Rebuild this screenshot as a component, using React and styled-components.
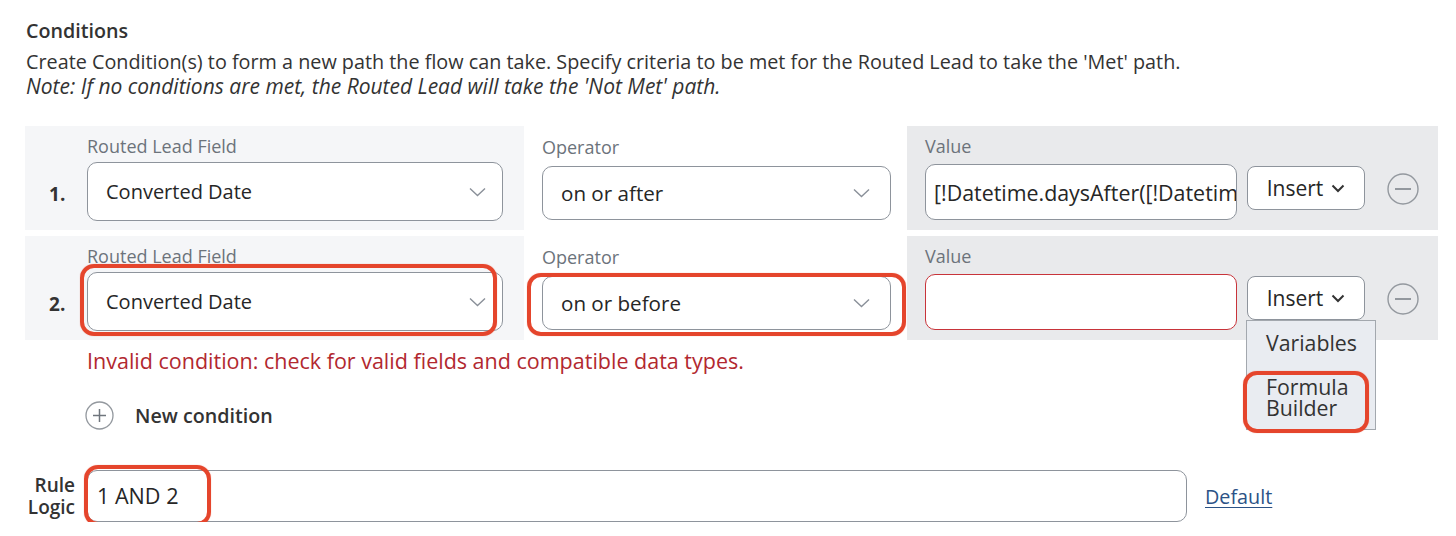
import React from "react";
import styled, { createGlobalStyle } from "styled-components";

const GlobalStyle = createGlobalStyle`
  body {
    margin: 0;
    background: #ffffff;
    font-family: "Open Sans", "Noto Sans", sans-serif;
    color: #333333;
  }
`;

const Page = styled.div`
  padding: 19px 18px 0 25px;
  width: 1413px;
`;

const Title = styled.h3`
  margin: 0 0 0 1px;
  font-size: 19.7px;
  font-weight: 600;
  line-height: 24px;
  color: #333;
`;

const Desc = styled.p`
  margin: 6px 0 0 1px;
  font-size: 19.8px;
  line-height: 25px;
  color: #333;
  white-space: nowrap;
  em {
    display: block;
    font-size: 21px;
  }
`;

const List = styled.div`
  margin-top: 27px;
  display: flex;
  flex-direction: column;
  gap: 6px;
`;

const Row = styled.div`
  display: grid;
  grid-template-columns: 499px 383px 531px;
  height: 104px;
`;

const FieldCell = styled.div`
  background: #f5f6f8;
  padding: 8px 21px 0 0;
  display: grid;
  grid-template-columns: 62px 1fr;
  grid-template-rows: 24px 59px;
  row-gap: 4px;
`;

const Label = styled.div`
  grid-column: 2;
  font-size: 18px;
  line-height: 24px;
  color: #6c737b;
  white-space: nowrap;
`;

const Num = styled.div`
  grid-column: 1;
  grid-row: 2;
  align-self: center;
  padding: 4px 0 0 24px;
  font-size: 19px;
  font-weight: 700;
  color: #333;
`;

const OperatorCell = styled.div`
  background: #ffffff;
  padding: 9px 16px 0 18px;
  display: flex;
  flex-direction: column;
  gap: 7px;
`;

const ValueCell = styled.div`
  background: #e9eaec;
  padding: 8px 0 0 18px;
  display: flex;
  flex-direction: column;
  gap: 6px;
`;

const Select = styled.div`
  position: relative;
  height: ${(p) => p.$h}px;
  box-sizing: border-box;
  background: #fff;
  border: 1px solid #8e949c;
  border-radius: 10px;
  display: flex;
  align-items: center;
  justify-content: space-between;
  padding: 0 ${(p) => p.$pr}px 0 18px;
  font-size: ${(p) => p.$fs}px;
  color: #262626;
`;

const Controls = styled.div`
  display: flex;
  align-items: flex-start;
`;

const ValueInput = styled.div`
  width: 312px;
  height: 56px;
  box-sizing: border-box;
  background: #fff;
  border: 1px solid ${(p) => (p.$invalid ? "#c8343a" : "#8e949c")};
  border-radius: 10px;
  padding: 0 0 0 8px;
  display: flex;
  align-items: center;
  overflow: hidden;
  white-space: nowrap;
  font-size: 21.4px;
  color: #262626;
`;

const InsertWrap = styled.div`
  position: relative;
  margin: 2px 0 0 10px;
`;

const InsertButton = styled.div`
  width: 118px;
  height: 44px;
  box-sizing: border-box;
  background: #fff;
  border: 1px solid #8e949c;
  border-radius: 8px;
  display: flex;
  align-items: center;
  justify-content: center;
  gap: 8px;
  font-size: 21px;
  color: #262626;
`;

const Menu = styled.div`
  position: absolute;
  top: 100%;
  left: -1px;
  width: 130px;
  height: 110px;
  box-sizing: border-box;
  background: #e9ecf1;
  border: 1px solid #a3a8ae;
  padding: 9px 0 0 0;
  z-index: 5;
`;

const MenuItem = styled.div`
  position: relative;
  padding: 0 0 0 19px;
  font-size: 21.3px;
  line-height: ${(p) => p.$lh}px;
  color: #333;
  margin-bottom: ${(p) => p.$mb || 0}px;
`;

const RemoveButton = styled.div`
  margin: 9px 0 0 22px;
  width: 32px;
  height: 32px;
`;

const Highlight = styled.div`
  position: relative;
  &::after {
    content: "";
    position: absolute;
    top: ${(p) => p.$t}px;
    left: ${(p) => p.$l}px;
    right: ${(p) => p.$r}px;
    bottom: ${(p) => p.$b}px;
    border: 4px solid #e5452c;
    border-radius: 14px;
    box-shadow: 0 0 1px rgba(229, 69, 44, 0.6);
    pointer-events: none;
    z-index: 6;
  }
`;

const RuleValue = styled(Highlight)`
  height: 26px;
  line-height: 26px;
`;

const ErrorText = styled.div`
  margin: 8px 0 0 62px;
  font-size: 21.5px;
  line-height: 26px;
  color: #b2282f;
  white-space: nowrap;
`;

const NewCondition = styled.div`
  margin: 26px 0 0 60px;
  display: flex;
  align-items: center;
  gap: 21px;
  height: 30px;
  font-size: 19.7px;
  font-weight: 600;
  color: #333;
`;

const RuleRow = styled.div`
  margin-top: 40px;
  display: flex;
  align-items: center;
`;

const RuleLabel = styled.div`
  width: 50px;
  margin-right: 12px;
  text-align: right;
  font-size: 19px;
  font-weight: 600;
  line-height: 22px;
  color: #333;
`;

const RuleInput = styled.div`
  width: 1100px;
  height: 52px;
  box-sizing: border-box;
  border: 1px solid #8e949c;
  border-radius: 10px;
  padding-left: 9px;
  display: flex;
  align-items: center;
  font-size: 21.6px;
  color: #262626;
`;

const DefaultLink = styled.a`
  margin-left: 18px;
  font-size: 19.8px;
  color: #2b5286;
  text-decoration: underline;
  text-underline-offset: 3px;
`;

const SelectChevron = () => (
  <svg width="17" height="10" viewBox="0 0 17 10">
    <polyline points="1,1.5 8.5,8.5 16,1.5" fill="none" stroke="#8a9099" strokeWidth="1.4" />
  </svg>
);

const InsertChevron = () => (
  <svg width="14" height="9" viewBox="0 0 14 9">
    <polyline points="1.5,1.5 7,7 12.5,1.5" fill="none" stroke="#333" strokeWidth="2" />
  </svg>
);

const MinusCircle = () => (
  <svg width="32" height="32" viewBox="0 0 32 32">
    <circle cx="16" cy="16" r="15" fill="none" stroke="#93989e" strokeWidth="1.4" />
    <line x1="8" y1="16" x2="24" y2="16" stroke="#93989e" strokeWidth="2" />
  </svg>
);

const PlusCircle = () => (
  <svg width="29" height="29" viewBox="0 0 29 29">
    <circle cx="14.5" cy="14.5" r="13.5" fill="none" stroke="#93989e" strokeWidth="1.3" />
    <line x1="8" y1="14.5" x2="21" y2="14.5" stroke="#6f757c" strokeWidth="1.5" />
    <line x1="14.5" y1="8" x2="14.5" y2="21" stroke="#6f757c" strokeWidth="1.5" />
  </svg>
);

const conditions = [
  { n: 1, field: "Converted Date", op: "on or after", value: "[!Datetime.daysAfter([!Datetime.now], 3)]" },
  { n: 2, field: "Converted Date", op: "on or before", value: "", invalid: true, open: true },
];

function ConditionRow({ c }) {
  const field = (
    <Select $h={59} $pr={16} $fs={20}>
      {c.field}
      <SelectChevron />
    </Select>
  );
  const op = (
    <Select $h={54} $pr={20} $fs={20.6}>
      {c.op}
      <SelectChevron />
    </Select>
  );
  return (
    <Row>
      <FieldCell>
        <Label>Routed Lead Field</Label>
        <Num>{c.n}.</Num>
        {c.open ? (
          <Highlight $t={-8} $l={-7} $r={6} $b={-5}>
            {field}
          </Highlight>
        ) : (
          field
        )}
      </FieldCell>
      <OperatorCell>
        <Label>Operator</Label>
        {c.open ? (
          <Highlight $t={-3} $l={-15} $r={-15} $b={-6}>
            {op}
          </Highlight>
        ) : (
          op
        )}
      </OperatorCell>
      <ValueCell>
        <Label>Value</Label>
        <Controls>
          <ValueInput $invalid={c.invalid}>{c.value}</ValueInput>
          <InsertWrap>
            <InsertButton>
              Insert
              <InsertChevron />
            </InsertButton>
            {c.open && (
              <Menu>
                <MenuItem $lh={26} $mb={20}>Variables</MenuItem>
                <Highlight $t={-5} $l={-4} $r={6} $b={-15}>
                  <MenuItem $lh={21}>
                    Formula
                    <br />
                    Builder
                  </MenuItem>
                </Highlight>
              </Menu>
            )}
          </InsertWrap>
          <RemoveButton>
            <MinusCircle />
          </RemoveButton>
        </Controls>
      </ValueCell>
    </Row>
  );
}

export default function App() {
  return (
    <>
      <GlobalStyle />
      <Page>
        <Title>Conditions</Title>
        <Desc>
          Create Condition(s) to form a new path the flow can take. Specify criteria to be met for the Routed Lead to
          take the 'Met' path.
          <em>Note: If no conditions are met, the Routed Lead will take the 'Not Met' path.</em>
        </Desc>
        <List>
          {conditions.map((c) => (
            <ConditionRow key={c.n} c={c} />
          ))}
        </List>
        <ErrorText>Invalid condition: check for valid fields and compatible data types.</ErrorText>
        <NewCondition>
          <PlusCircle />
          New condition
        </NewCondition>
        <RuleRow>
          <RuleLabel>
            Rule
            <br />
            Logic
          </RuleLabel>
          <RuleInput>
            <RuleValue $t={-18} $l={-13} $r={-32} $b={-17}>
              1 AND 2
            </RuleValue>
          </RuleInput>
          <DefaultLink href="#">Default</DefaultLink>
        </RuleRow>
      </Page>
    </>
  );
}
